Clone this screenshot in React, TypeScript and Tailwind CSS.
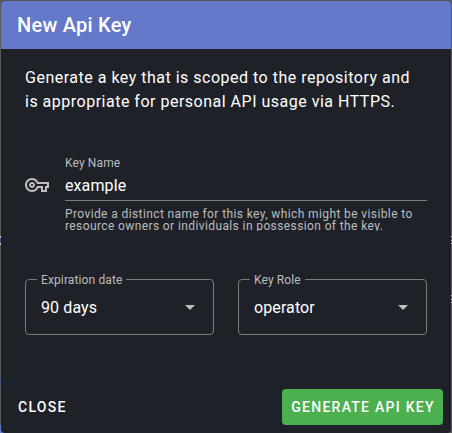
import React from "react";

function KeyIcon() {
  return (
    <svg viewBox="0 0 24 24" className="mt-6 h-6 w-6 shrink-0 fill-[#bcbdbe]" aria-hidden="true">
      <path d="M22 19H16V15H13.32C12.18 17.42 9.72 19 7 19C3.14 19 0 15.86 0 12S3.14 5 7 5C9.72 5 12.17 6.58 13.32 9H24V15H22V19M18 17H20V13H22V11H11.94L11.71 10.33C11 8.34 9.11 7 7 7C4.24 7 2 9.24 2 12S4.24 17 7 17C9.11 17 11 15.66 11.71 13.67L11.94 13H18V17M7 15C5.35 15 4 13.65 4 12S5.35 9 7 9 10 10.35 10 12 8.65 15 7 15M7 11C6.45 11 6 11.45 6 12S6.45 13 7 13 8 12.55 8 12 7.55 11 7 11Z" />
    </svg>
  );
}

function SelectField({ label, value }: { label: string; value: string }) {
  return (
    <div className="relative flex h-14 w-[189px] items-center justify-between rounded border border-[#787a7d] pr-[11px] pl-[15px]">
      <span className="absolute -top-[7px] left-[11px] bg-[#1e2128] px-1 text-xs leading-[14px] tracking-[0.12px] whitespace-nowrap text-[#bcbdbe]">
        {label}
      </span>
      <span className="pt-0.5 text-base tracking-[0.1px] text-white">{value}</span>
      <svg viewBox="0 0 24 24" className="h-6 w-6 fill-[#bcbdbe]" aria-hidden="true">
        <path d="M7,10L12,15L17,10H7Z" />
      </svg>
    </div>
  );
}

export default function App() {
  return (
    <div className="relative h-[433px] w-[452px] overflow-hidden bg-[#58595b] p-px pb-0 font-['Roboto',sans-serif]">
      <div className="absolute top-[377px] left-0 h-2 w-px bg-[#4a5687]" />
      <div className="absolute top-[425px] left-0 h-2 w-2 bg-[#6579ca]" />
      <div className="absolute top-[236px] left-0 h-[9px] w-px border-y-2 border-[#c4c5cc] bg-[#53587a]" />
      <div className="absolute top-[236px] right-0 flex h-2 w-px flex-col justify-between">
        <div className="h-px bg-[#c4c5cc]" />
        <div className="h-px bg-[#c4c5cc]" />
        <div className="h-px bg-[#c4c5cc]" />
      </div>
      <div className="absolute top-[295px] right-0 flex h-2 w-px flex-col justify-between">
        <div className="h-px bg-[#c4c5cc]" />
        <div className="h-px bg-[#c4c5cc]" />
        <div className="h-px bg-[#c4c5cc]" />
      </div>
      <section className="relative flex h-[432px] w-[450px] flex-col overflow-hidden rounded bg-[#1e2128]">
        <h1 className="flex h-12 shrink-0 items-center bg-[#6579ca] px-4 text-xl font-medium tracking-[0.25px] text-white">
          New Api Key
        </h1>
        <p className="mt-[17px] ml-6 text-base leading-6 tracking-[0.5px] text-white">
          Generate a key that is scoped to the repository and
          <br />
          is appropriate for personal API usage via HTTPS.
        </p>
        <div className="mt-[35px] flex px-6">
          <KeyIcon />
          <div className="ml-4 w-[362px] pt-[7px]">
            <div className="text-xs leading-[14px] tracking-[0.12px] text-[#bcbdbe]">Key Name</div>
            <div className="flex h-[31px] items-center border-b border-[#787a7d] pt-0.5 text-base tracking-[0.1px] text-white">
              example
            </div>
            <div className="mt-[7px] h-[23px] overflow-hidden text-xs leading-3 tracking-[0.39px] whitespace-nowrap text-[#bcbdbe]">
              Provide a distinct name for this key, which might be visible to
              <br />
              resource owners or individuals in possession of the key.
            </div>
          </div>
        </div>
        <div className="mt-12 flex gap-6 px-6">
          <SelectField label="Expiration date" value="90 days" />
          <SelectField label="Key Role" value="operator" />
        </div>
        <div className="mt-auto flex items-center justify-between p-2 text-sm font-medium tracking-[1.25px] text-white">
          <button className="h-9 px-[9px]">CLOSE</button>
          <button className="h-9 w-[161px] rounded bg-[#4caf50] pl-px whitespace-nowrap">GENERATE API KEY</button>
        </div>
      </section>
    </div>
  );
}
